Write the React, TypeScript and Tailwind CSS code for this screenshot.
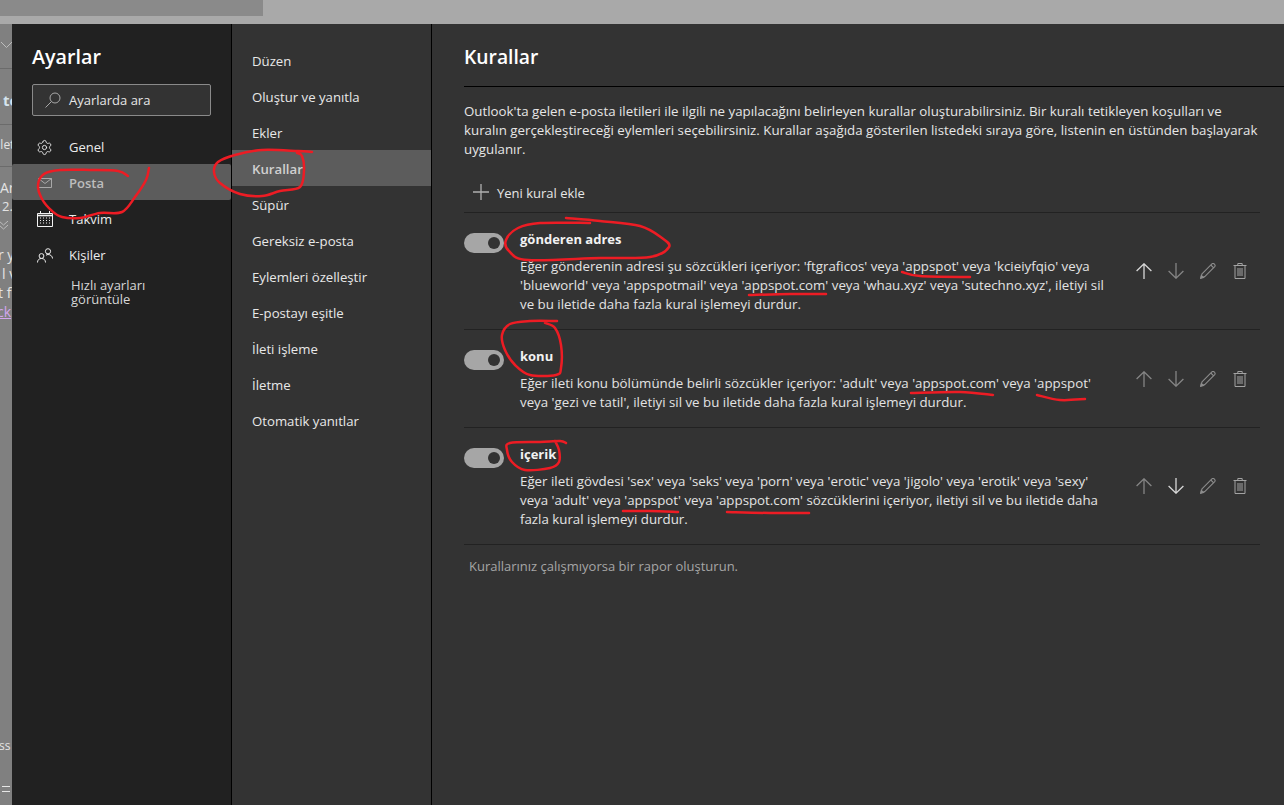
import React from "react";
import { Settings } from "lucide-react";

const font = { fontFamily: '"Open Sans", "Noto Sans", sans-serif' };

function smooth(p: number[][]) {
  let d = `M${p[0][0]} ${p[0][1]}`;
  for (let i = 0; i < p.length - 1; i++) {
    const a = p[Math.max(i - 1, 0)], b = p[i], c = p[i + 1], e = p[Math.min(i + 2, p.length - 1)];
    d += ` C${b[0] + (c[0] - a[0]) / 6} ${b[1] + (c[1] - a[1]) / 6} ${c[0] - (e[0] - b[0]) / 6} ${c[1] - (e[1] - b[1]) / 6} ${c[0]} ${c[1]}`;
  }
  return d;
}

const marks: number[][][] = [
  [[128,176],[118,171],[90,170],[60,170],[44,174],[38,185],[42,199],[52,211],[62,217],[80,218],[100,213],[122,212],[135,197],[146,180],[149,168]],
  [[312,152],[298,151],[262,150],[235,155],[218,162],[214,172],[220,183],[240,194],[262,196],[280,191],[300,187],[304,170],[302,156],[297,153]],
  [[566,218],[600,221],[640,226],[662,238],[669,247],[650,257],[600,258],[528,260],[509,251],[506,240],[518,228],[540,223],[590,223]],
  [[557,321],[530,321],[510,324],[502,335],[505,350],[515,365],[530,375],[556,375],[561,368],[561,345],[555,328],[545,323]],
  [[566,443],[560,441],[540,442],[510,443],[507,450],[512,462],[525,470],[550,468],[559,462],[559,450],[555,441]],
  [[902,272],[920,276],[970,277]],
  [[749,295],[790,294],[826,294]],
  [[911,393],[960,392],[993,395]],
  [[1037,395],[1060,400],[1085,399]],
  [[623,511],[650,511],[678,512]],
  [[727,512],[770,513],[809,513]],
];

function Arrow({ up, on }: { up?: boolean; on?: boolean }) {
  return (
    <svg width="16" height="16" viewBox="0 0 16 16" fill="none" stroke={on ? "#d8d8d8" : "#858585"} strokeWidth="1.3">
      {up ? <path d="M8 16V0.8M0.6 8L8 0.8L15.4 8" /> : <path d="M8 0V15.2M0.6 8L8 15.2L15.4 8" />}
    </svg>
  );
}
function Pencil() {
  return (
    <svg width="16" height="16" viewBox="0 0 16 16" fill="none" stroke="#8c8c8c" strokeWidth="1.1">
      <path d="M2 10.8L11.9 0.9C12.6 0.3 13.6 0.3 14.4 1.1C15.2 1.9 15.3 2.9 14.7 3.6L4.8 13.6L0.9 15Z" />
      <path d="M10.8 2L13.7 4.8" />
      <path d="M0.7 15.3L1.3 12.5L3.6 14.5Z" fill="#8c8c8c" />
    </svg>
  );
}
function Trash() {
  return (
    <svg width="14" height="16" viewBox="0 0 14 16" fill="none" stroke="#a3a3a3" strokeWidth="1">
      <path d="M0.5 2.5H13.5M2 2.5V15.5H12V2.5M4.8 2.5V0.5H9.2V2.5M5 5V13M7 5V13M9 5V13" />
    </svg>
  );
}

function Rule({ title, lines, up, down, cls }: { title: string; lines: string[]; up?: boolean; down?: boolean; cls: string }) {
  return (
    <div className={`flex items-center border-b border-[#222222] ${cls}`}>
      <div className="w-[56px] shrink-0 self-start pt-[3px]">
        <div className="flex h-[20px] w-[40px] items-center justify-end rounded-full bg-[#a6a6a6] pr-[4px]">
          <div className="h-[12px] w-[12px] rounded-full bg-[#333333]" />
        </div>
      </div>
      <div className="flex-1 self-start">
        <div className="text-[13px] font-bold leading-[19px] text-[#f2f2f2]">{title}</div>
        <div className="mt-[8px] text-[13.3px] leading-[19px] text-[#e3e3e3]">
          {lines.map((l) => (
            <div key={l} className="whitespace-nowrap">{l}</div>
          ))}
        </div>
      </div>
      <div className="-mt-[17px] flex items-center gap-[16px] pr-[12px]">
        <Arrow up on={up} />
        <Arrow on={down} />
        <Pencil />
        <div className="flex w-[16px] justify-center"><Trash /></div>
      </div>
    </div>
  );
}

function NavIcon({ name }: { name: string }) {
  const s = { fill: "none", stroke: "#ededed", strokeWidth: 1 };
  if (name === "gear") return <Settings size={17} strokeWidth={1.25} color="#ededed" />;
  if (name === "mail")
    return (
      <svg {...s} width="14" height="10" viewBox="0 0 14 10" stroke="#a8a8a8">
        <path d="M.5.5h13v9H.5zM.5.5L7 5.500L13.500.5" />
      </svg>
    );
  if (name === "cal")
    return (
      <svg {...s} width="16" height="16" viewBox="0 0 16 16" stroke="#f2f2f2">
        <path d="M.5 2.500h15v13H.5zM3.500 0v3M12.500 0v3" />
        <path d="M.5 4.500h15" strokeWidth="1.600" />
        <path d="M3 7h1M6 7h1M9 7h1M12 7h1M3 9.500h1M6 9.500h1M9 9.500h1M12 9.500h1M3 12h1M6 12h1M9 12h1M12 12h1" strokeWidth="1.200" />
      </svg>
    );
  return (
    <svg {...s} width="16" height="15" viewBox="0 0 16 15">
      <circle cx="11" cy="3.300" r="2.600" />
      <circle cx="4.500" cy="8" r="2.400" />
      <path d="M.5 14.500c0-2.500 1.500-4 4-4s4 1.500 4 4M9 7.300c.7-.6 1.300-.8 2-.8 2.700 0 4.500 1.800 4.500 4" />
    </svg>
  );
}

export default function App() {
  const nav: [string, string][] = [["Genel", "gear"], ["Posta", "mail"], ["Takvim", "cal"], ["Kişiler", "people"]];
  const sub = ["Düzen", "Oluştur ve yanıtla", "Ekler", "Kurallar", "Süpür", "Gereksiz e-posta", "Eylemleri özelleştir", "E-postayı eşitle", "İleti işleme", "İletme", "Otomatik yanıtlar"];
  return (
    <div style={font} className="relative flex h-[805px] w-[1284px] flex-col overflow-hidden bg-[#a9a9a9]">
      <div className="h-[24px] shrink-0">
        <div className="h-[16px] w-[263px] bg-[#8a8a8a]" />
      </div>
      <div className="flex min-h-0 flex-1">
        {/* dimmed app behind */}
        <div className="relative w-[12px] shrink-0 overflow-hidden bg-[#808080] text-[13px] leading-[18px] text-[#e4e4e4]">
          <svg className="absolute left-[1px] top-[18px]" width="11" height="7" viewBox="0 0 11 7" fill="none" stroke="#bdbdbd"><path d="M0 0L5.500 5.500L11 0" /></svg>
          <div className="absolute left-0 top-[44px] h-px w-full bg-[#6b6b6b]" />
          <div className="absolute left-[3px] top-[67px] text-[15px] font-bold text-[#d5e4ee]">to</div>
          <div className="absolute left-0 top-[100px] h-px w-full bg-[#6b6b6b]" />
          <div className="absolute left-[-3px] top-[112px] text-[12px]">İlet</div>
          <div className="absolute left-0 top-[142px] h-px w-full bg-[#6b6b6b]" />
          <div className="absolute left-0 top-[155px] text-[14px]">Ar</div>
          <div className="absolute left-[2px] top-[173px]">2.</div>
          <svg className="absolute left-[-1px] top-[197px]" width="9" height="9" viewBox="0 0 9 9" fill="none" stroke="#bdbdbd"><path d="M0 0L4.500 4L9 0M0 4L4.500 8L9 4" /></svg>
          <div className="absolute left-[-2px] top-[222px] whitespace-nowrap text-[14px]">r y</div>
          <div className="absolute left-[2px] top-[241px] whitespace-nowrap text-[14px]">l v</div>
          <div className="absolute left-[-2px] top-[260px] whitespace-nowrap text-[14px]">t f</div>
          <div className="absolute left-[-3px] top-[279px] text-[14px] text-[#d3a6ee] underline">ck</div>
          <div className="absolute left-[-1px] top-[713px] text-[12px]">ss</div>
          <div className="absolute left-[2px] top-[762px] h-[6px] w-[8px] border-y border-[#e6e6e6]" />
        </div>

        {/* sidebar */}
        <div className="w-[220px] shrink-0 border-r border-black bg-[#212121]">
          <div className="pl-[20px] pt-[18px] text-[19.7px] font-semibold leading-[30px] text-white">Ayarlar</div>
          <div className="ml-[20px] mt-[12px] flex h-[32px] w-[179px] items-center rounded-[2px] border border-[#8a8a8a] bg-[#333333] pl-[12px] text-[13px] text-[#e6e6e6]">
            <svg width="16" height="16" viewBox="0 0 16 16" fill="none" stroke="#a8a8a8" className="mr-[8px]">
              <circle cx="10" cy="6" r="5" />
              <path d="M6.500 9.500L0.500 15.500" />
            </svg>
            <span className="pt-[2px]">Ayarlarda ara</span>
          </div>
          <div className="mt-[12px]">
            {nav.map(([n, ic]) => (
              <div key={n} className={`flex h-[36px] items-center pt-[2px] ${n === "Posta" ? "rounded-[2px] bg-[#5c5c5c] font-semibold text-[#bdbdbd]" : "text-[#ececec]"} text-[13px]`}>
                <div className="flex w-[57px] justify-center pl-[8px]"><NavIcon name={ic} /></div>
                <span className="pt-[2px]">{n}</span>
              </div>
            ))}
          </div>
          <div className="ml-[59px] mt-[6px] text-[13px] leading-[14px] text-[#d6d6d6]">Hızlı ayarları<br />görüntüle</div>
        </div>

        {/* sub nav */}
        <div className="w-[200px] shrink-0 border-r border-black bg-[#333333] pt-[18px]">
          {sub.map((n) => (
            <div key={n} className={`flex h-[36px] items-center pl-[20px] pt-[4px] text-[13.2px] ${n === "Kurallar" ? "bg-[#5c5c5c] font-semibold text-[#d0d0d0]" : "text-[#e8e8e8]"}`}>{n}</div>
          ))}
        </div>

        {/* content */}
        <div className="min-w-0 flex-1 bg-[#333333] pl-[32px]">
          <div className="relative flex h-[63px] items-start border-b border-black pt-[18px] text-[19.3px] font-semibold leading-[30px] text-white">
            Kurallar
            <svg className="absolute right-[-17px] top-[25px]" width="13" height="13" viewBox="0 0 13 13" stroke="#a8a8a8" fill="none"><path d="M.5.5l12 12M12.500.5l-12 12" /></svg>
          </div>
          <div className="mr-[24px]">
            <div className="pt-[15px] text-[13.3px] leading-[19px] text-[#e6e6e6]">
              <div className="whitespace-nowrap">Outlook'ta gelen e-posta iletileri ile ilgili ne yapılacağını belirleyen kurallar oluşturabilirsiniz. Bir kuralı tetikleyen koşulları ve</div>
              <div className="whitespace-nowrap">kuralın gerçekleştireceği eylemleri seçebilirsiniz. Kurallar aşağıda gösterilen listedeki sıraya göre, listenin en üstünden başlayarak</div>
              <div>uygulanır.</div>
            </div>
            <div className="flex h-[54px] items-center border-b border-[#222222] pl-[9px] pt-[12px] text-[13px] text-[#e6e6e6]">
              <svg width="16" height="16" viewBox="0 0 16 16" stroke="#b0b0b0" strokeWidth="1.300" className="mr-[8px]"><path d="M8 0V16M0 8H16" /></svg>
              <span className="pt-[4px]">Yeni kural ekle</span>
            </div>
            <Rule cls="h-[117px] pt-[17px]" up title="gönderen adres" lines={["Eğer gönderenin adresi şu sözcükleri içeriyor: 'ftgraficos' veya 'appspot' veya 'kcieiyfqio' veya", "'blueworld' veya 'appspotmail' veya 'appspot.com' veya 'whau.xyz' veya 'sutechno.xyz', iletiyi sil", "ve bu iletide daha fazla kural işlemeyi durdur."]} />
            <Rule cls="h-[98px] pt-[17px]" title="konu" lines={["Eğer ileti konu bölümünde belirli sözcükler içeriyor: 'adult' veya 'appspot.com' veya 'appspot'", "veya 'gezi ve tatil', iletiyi sil ve bu iletide daha fazla kural işlemeyi durdur."]} />
            <Rule cls="h-[117px] pt-[17px]" down title="içerik" lines={["Eğer ileti gövdesi 'sex' veya 'seks' veya 'porn' veya 'erotic' veya 'jigolo' veya 'erotik' veya 'sexy'", "veya 'adult' veya 'appspot' veya 'appspot.com' sözcüklerini içeriyor, iletiyi sil ve bu iletide daha", "fazla kural işlemeyi durdur."]} />
            <div className="pl-[5px] pt-[12px] text-[13px] leading-[19px] text-[#a6a6a6]">Kurallarınız çalışmıyorsa bir rapor oluşturun.</div>
          </div>
        </div>
      </div>

      <svg className="pointer-events-none absolute left-0 top-0" width="1284" height="805" fill="none" stroke="#ed1c24" strokeWidth="2.500" strokeLinecap="round" strokeLinejoin="round">
        {marks.map((m, i) => (
          <path key={i} d={smooth(m)} />
        ))}
      </svg>
    </div>
  );
}
